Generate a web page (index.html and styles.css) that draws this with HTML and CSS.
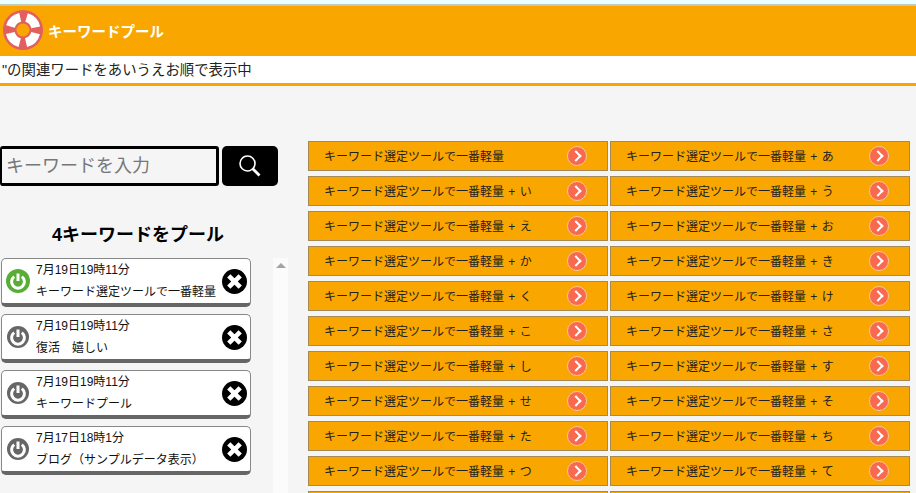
FILE: index.html
```html
<!DOCTYPE html>
<html lang="ja">
<head>
<meta charset="utf-8">
<title>キーワードプール</title>
<link rel="stylesheet" href="styles.css">
</head>
<body>
<div class="topstrip"></div>
<header class="header">
  <svg class="logo" width="40" height="40" viewBox="0 0 40 40">
    <circle cx="20" cy="20" r="20" fill="#e25f5f"/>
    <circle cx="20" cy="20" r="13" fill="none" stroke="#fff" stroke-width="9" stroke-dasharray="13.9 6.52" stroke-dashoffset="-3.26"/>
    <circle cx="20" cy="20" r="6.5" fill="#faa600"/>
  </svg>
  <span class="brand">キーワードプール</span>
</header>
<div class="status"><span class="status-text">"の関連ワードをあいうえお順で表示中</span></div>
<main class="main">
  <aside class="side">
    <form class="search">
      <input class="search-input" type="text" placeholder="キーワードを入力">
      <button class="search-btn" type="button" aria-label="検索">
        <svg width="24" height="24" viewBox="0 0 24 24"><circle cx="9.5" cy="9.5" r="7.5" fill="none" stroke="#fff" stroke-width="1.6"/><path d="M14.5 14.5L21.5 21.5" stroke="#fff" stroke-width="2.8"/></svg>
      </button>
    </form>
    <h2 class="pool-title">4キーワードをプール</h2>
    <div class="pool-wrap">
      <ul class="pool">
        <li class="card">
          <svg class="power" width="24" height="24" viewBox="0 0 24 24"><circle cx="12" cy="12" r="12" fill="#58ad35"/><path d="M8.2 7.6A6.4 6.4 0 1 0 15.8 7.6" fill="none" stroke="#fff" stroke-width="3"/><path d="M12 4.5V12" stroke="#fff" stroke-width="3"/></svg>
          <div class="card-body"><div class="date">7月19日19時11分</div><div class="word">キーワード選定ツールで一番軽量</div></div>
          <svg class="close" width="25" height="25" viewBox="0 0 24 24"><circle cx="12" cy="12" r="12" fill="#000"/><path d="M6.5 6.5L17.5 17.5M17.5 6.5L6.5 17.5" stroke="#fff" stroke-width="4.4"/></svg>
        </li>
        <li class="card">
          <svg class="power" width="24" height="24" viewBox="0 0 24 24"><circle cx="12" cy="12" r="11" fill="#666"/><path d="M8.2 7.6A6.4 6.4 0 1 0 15.8 7.6" fill="none" stroke="#fff" stroke-width="3"/><path d="M12 4.5V12" stroke="#fff" stroke-width="3"/></svg>
          <div class="card-body"><div class="date">7月19日19時11分</div><div class="word">復活　嬉しい</div></div>
          <svg class="close" width="25" height="25" viewBox="0 0 24 24"><circle cx="12" cy="12" r="12" fill="#000"/><path d="M6.5 6.5L17.5 17.5M17.5 6.5L6.5 17.5" stroke="#fff" stroke-width="4.4"/></svg>
        </li>
        <li class="card">
          <svg class="power" width="24" height="24" viewBox="0 0 24 24"><circle cx="12" cy="12" r="11" fill="#666"/><path d="M8.2 7.6A6.4 6.4 0 1 0 15.8 7.6" fill="none" stroke="#fff" stroke-width="3"/><path d="M12 4.5V12" stroke="#fff" stroke-width="3"/></svg>
          <div class="card-body"><div class="date">7月19日19時11分</div><div class="word">キーワードプール</div></div>
          <svg class="close" width="25" height="25" viewBox="0 0 24 24"><circle cx="12" cy="12" r="12" fill="#000"/><path d="M6.5 6.5L17.5 17.5M17.5 6.5L6.5 17.5" stroke="#fff" stroke-width="4.4"/></svg>
        </li>
        <li class="card">
          <svg class="power" width="24" height="24" viewBox="0 0 24 24"><circle cx="12" cy="12" r="11" fill="#666"/><path d="M8.2 7.6A6.4 6.4 0 1 0 15.8 7.6" fill="none" stroke="#fff" stroke-width="3"/><path d="M12 4.5V12" stroke="#fff" stroke-width="3"/></svg>
          <div class="card-body"><div class="date">7月17日18時1分</div><div class="word">ブログ（サンプルデータ表示）</div></div>
          <svg class="close" width="25" height="25" viewBox="0 0 24 24"><circle cx="12" cy="12" r="12" fill="#000"/><path d="M6.5 6.5L17.5 17.5M17.5 6.5L6.5 17.5" stroke="#fff" stroke-width="4.4"/></svg>
        </li>
      </ul>
      <div class="scrollbar"><span class="scroll-arrow"></span></div>
    </div>
  </aside>
  <section class="grid">
    <a class="kw"><span>キーワード選定ツールで一番軽量</span><i class="go"></i></a>
    <a class="kw"><span>キーワード選定ツールで一番軽量 + あ</span><i class="go"></i></a>
    <a class="kw"><span>キーワード選定ツールで一番軽量 + い</span><i class="go"></i></a>
    <a class="kw"><span>キーワード選定ツールで一番軽量 + う</span><i class="go"></i></a>
    <a class="kw"><span>キーワード選定ツールで一番軽量 + え</span><i class="go"></i></a>
    <a class="kw"><span>キーワード選定ツールで一番軽量 + お</span><i class="go"></i></a>
    <a class="kw"><span>キーワード選定ツールで一番軽量 + か</span><i class="go"></i></a>
    <a class="kw"><span>キーワード選定ツールで一番軽量 + き</span><i class="go"></i></a>
    <a class="kw"><span>キーワード選定ツールで一番軽量 + く</span><i class="go"></i></a>
    <a class="kw"><span>キーワード選定ツールで一番軽量 + け</span><i class="go"></i></a>
    <a class="kw"><span>キーワード選定ツールで一番軽量 + こ</span><i class="go"></i></a>
    <a class="kw"><span>キーワード選定ツールで一番軽量 + さ</span><i class="go"></i></a>
    <a class="kw"><span>キーワード選定ツールで一番軽量 + し</span><i class="go"></i></a>
    <a class="kw"><span>キーワード選定ツールで一番軽量 + す</span><i class="go"></i></a>
    <a class="kw"><span>キーワード選定ツールで一番軽量 + せ</span><i class="go"></i></a>
    <a class="kw"><span>キーワード選定ツールで一番軽量 + そ</span><i class="go"></i></a>
    <a class="kw"><span>キーワード選定ツールで一番軽量 + た</span><i class="go"></i></a>
    <a class="kw"><span>キーワード選定ツールで一番軽量 + ち</span><i class="go"></i></a>
    <a class="kw"><span>キーワード選定ツールで一番軽量 + つ</span><i class="go"></i></a>
    <a class="kw"><span>キーワード選定ツールで一番軽量 + て</span><i class="go"></i></a>
    <a class="kw"></a>
    <a class="kw"></a>
  </section>
</main>
</body>
</html>
```
FILE: styles.css
```css
* { box-sizing: border-box; }
html, body { margin: 0; height: 100%; overflow: hidden; }
body { background: #f5f5f5; font-family: "Liberation Sans", "Noto Sans CJK JP", sans-serif; color: #000; }
.topstrip { height: 6px; background: #eaffff; border-bottom: 2px solid #c8c8b8; }
.header { height: 50px; background: #faa600; display: flex; align-items: center; padding: 0 0 2px 3px; }
.logo { flex: none; }
.brand { margin-left: 5px; color: #fff; font-size: 14.5px; font-weight: bold; }
.status { height: 30px; background: #fff; border-bottom: 3px solid #faa600; padding-bottom: 3px; display: flex; align-items: center; overflow: hidden; }
.status-text { font-size: 14.4px; color: #222; margin-left: 2px; }
.main { display: flex; padding-top: 60px; align-items: flex-start; }
.side { width: 288px; flex: none; }
.search { display: flex; gap: 3px; height: 40px; }
.search-input { width: 219px; height: 40px; border: 3px solid #000; border-left-width: 2px; border-radius: 3px; background: #f5f5f5; padding: 0 4px; font-size: 18px; font-family: inherit; outline: none; }
.search-input::placeholder { color: #777; opacity: 1; }
.search-btn { width: 56px; height: 40px; background: #000; border: 0; border-radius: 5px; padding: 0; display: flex; align-items: center; justify-content: center; }
.pool-title { margin: 36px 0 0; width: 276px; font-size: 18px; line-height: 26px; font-weight: bold; text-align: center; }
.pool-wrap { display: flex; margin-top: 10px; }
.pool { list-style: none; margin: 0; padding: 0 0 0 1px; width: 273px; flex: none; display: flex; flex-direction: column; gap: 7px; }
.card { width: 250px; height: 49px; background: #fff; border: 1px solid #888; border-bottom: 4px solid #666; border-radius: 5px; display: flex; align-items: center; padding-left: 4px; }
.card-body { margin-left: 6px; flex: 1; font-size: 12px; line-height: 22px; color: #111; white-space: nowrap; }
.close { margin-right: 3px; flex: none; }
.power { flex: none; }
.scrollbar { width: 15px; height: 300px; background: #fbfbfb; display: flex; justify-content: center; padding-top: 5px; }
.scroll-arrow { width: 0; height: 0; border-left: 5px solid transparent; border-right: 5px solid transparent; border-bottom: 5px solid #a3a3a3; }
.grid { margin-left: 20px; margin-top: -5px; width: 602px; display: grid; grid-template-columns: 300px 300px; column-gap: 2px; row-gap: 5px; }
.kw { height: 30px; background: #faa600; border: 1px solid #a58a55; display: flex; align-items: center; padding: 0 0 2px 15px; font-size: 12px; color: #222; word-spacing: 1px; position: relative; }
.go { position: absolute; left: 258px; top: 4px; width: 20px; height: 20px; border-radius: 50%; background: #f8694f; border: 1px solid #fbc79c; }
.go::after { content: ""; position: absolute; left: 4px; top: 5px; width: 6px; height: 6px; border-top: 2px solid #fff; border-right: 2px solid #fff; transform: rotate(45deg); }
```
